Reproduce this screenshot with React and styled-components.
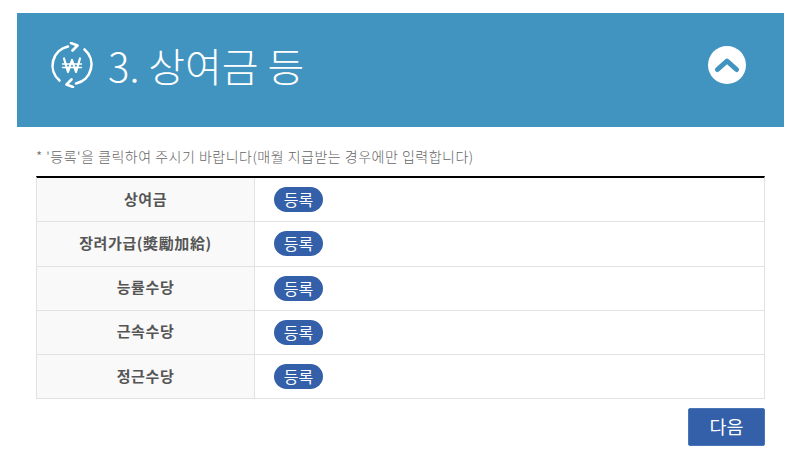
import React from 'react'
import styled, { createGlobalStyle } from 'styled-components'

const GlobalStyle = createGlobalStyle`
  html, body {
    margin: 0;
    padding: 0;
    background: #fff;
    font-family: 'Noto Sans CJK KR', 'Noto Sans', sans-serif;
  }
`

const Page = styled.div`
  width: 800px;
  height: 460px;
  padding: 13px 16px 0 17px;
  box-sizing: border-box;
  overflow: hidden;
`

const Header = styled.header`
  height: 114px;
  box-sizing: border-box;
  background: #4194bf;
  display: flex;
  align-items: center;
  justify-content: space-between;
  padding: 0 38px 10px 33px;
`

const TitleWrap = styled.div`
  display: flex;
  align-items: center;
  gap: 14px;
`

const Title = styled.h2`
  margin: 0;
  color: #fff;
  font-size: 40px;
  font-weight: 300;
  line-height: 50px;
  letter-spacing: 0;
`

const ToggleButton = styled.button`
  width: 38px;
  height: 38px;
  padding: 0;
  border: 0;
  border-radius: 50%;
  background: #fff;
  display: flex;
  align-items: center;
  justify-content: center;
`

const Body = styled.div`
  padding: 0 19px;
`

const Notice = styled.p`
  margin: 0;
  padding-top: 19px;
  height: 30px;
  color: #666;
  font-size: 14px;
  font-weight: 300;
  line-height: 20px;
  letter-spacing: 0.5px;
  white-space: nowrap;
`

const Table = styled.div`
  border-top: 2px solid #000;
  border-left: 1px solid #e2e2e2;
  border-right: 1px solid #e2e2e2;
`

const Row = styled.div`
  display: grid;
  grid-template-columns: 218px 1fr;
  height: 44.25px;
  box-sizing: border-box;
  border-bottom: 1px solid #e2e2e2;
`

const Label = styled.div`
  background: #f9f9f9;
  border-right: 1px solid #e2e2e2;
  display: flex;
  align-items: center;
  justify-content: center;
  padding-bottom: 3px;
  color: #555;
  font-size: 15px;
  font-weight: 700;
  letter-spacing: 0.6px;
`

const Cell = styled.div`
  display: flex;
  align-items: center;
  padding-left: 19px;
`

const Pill = styled.button`
  width: 49px;
  height: 25px;
  padding: 0;
  border: 0;
  border-radius: 13px;
  background: #3360a9;
  color: #fff;
  font-family: inherit;
  font-size: 16px;
  line-height: 25px;
`

const Footer = styled.div`
  display: flex;
  justify-content: flex-end;
  padding-top: 9px;
`

const NextButton = styled.button`
  width: 77px;
  height: 38px;
  padding: 0 0 2px;
  border: 1px solid #4a76b8;
  border-radius: 2px;
  background: #3360a9;
  color: #fff;
  font-family: inherit;
  font-size: 18.5px;
`

const WonCycleIcon = () => (
  <svg width="44" height="46" viewBox="0 0 44 46" fill="none" stroke="#fff" strokeLinecap="round" strokeLinejoin="round">
    <path d="M18 4.5A19.5 19.5 0 0 0 9.5 38.5" strokeWidth="2.6" />
    <path d="M26 41.5A19.5 19.5 0 0 0 34.5 7.5" strokeWidth="2.6" />
    <path d="M21 1L27.5 3.5L22.5 8.5" strokeWidth="2.6" />
    <path d="M23 45L16.5 42.5L21.5 37.5" strokeWidth="2.6" />
    <path d="M14 16.5L18 30L22 18L26 30L30 16.5" strokeWidth="2.2" />
    <path d="M12.5 22H31.5M12.5 25.5H31.5" strokeWidth="1.4" />
  </svg>
)

const ChevronUp = () => (
  <svg width="26" height="16" viewBox="0 0 26 16" fill="none" stroke="#4194bf" strokeWidth="5" strokeLinecap="round" strokeLinejoin="round">
    <path d="M3.5 12.5L13 4L22.5 12.5" />
  </svg>
)

const rows = ['상여금', '장려가급(奬勵加給)', '능률수당', '근속수당', '정근수당']

export default function App() {
  return (
    <Page>
      <GlobalStyle />
      <Header>
        <TitleWrap>
          <WonCycleIcon />
          <Title>3. 상여금 등</Title>
        </TitleWrap>
        <ToggleButton>
          <ChevronUp />
        </ToggleButton>
      </Header>
      <Body>
        <Notice>* '등록'을 클릭하여 주시기 바랍니다(매월 지급받는 경우에만 입력합니다)</Notice>
        <Table>
          {rows.map((name) => (
            <Row key={name}>
              <Label>{name}</Label>
              <Cell>
                <Pill>등록</Pill>
              </Cell>
            </Row>
          ))}
        </Table>
        <Footer>
          <NextButton>다음</NextButton>
        </Footer>
      </Body>
    </Page>
  )
}
